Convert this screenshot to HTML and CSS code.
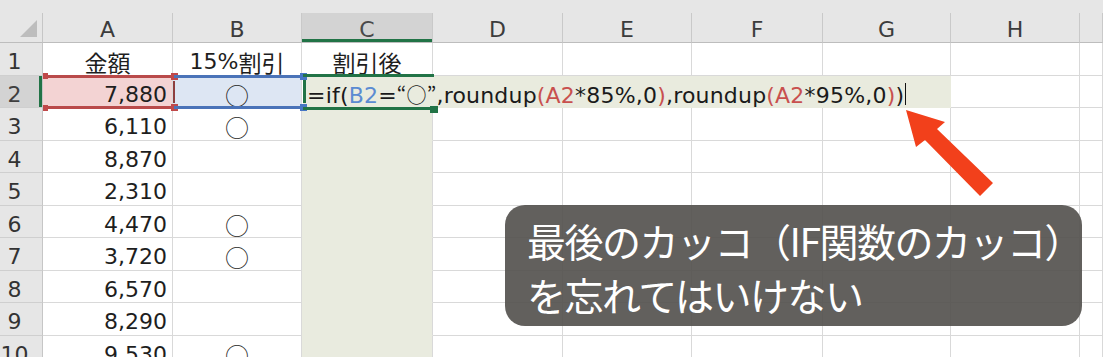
FILE: index.html
```html
<!DOCTYPE html>
<html lang="ja">
<head>
<meta charset="utf-8">
<title>Excel IF formula</title>
<link rel="stylesheet" href="styles.css">
</head>
<body>
<div class="wrap">
  <div class="band"></div>
  <div class="sheet">
    <div class="corner"><svg width="43" height="30" viewBox="0 0 43 30"><polygon points="20,24 37,7 37,24" fill="#bdbdbd"/></svg></div>
    <div class="ch">A</div><div class="ch">B</div><div class="ch ch-sel">C</div><div class="ch">D</div><div class="ch">E</div><div class="ch">F</div><div class="ch">G</div><div class="ch">H</div><div class="ch"></div>

    <div class="rh">1</div><div class="c cen jp">金額</div><div class="c cen">15%<span class="jp">割引</span></div><div class="c cen jp">割引後</div><div class="c"></div><div class="c"></div><div class="c"></div><div class="c"></div><div class="c"></div><div class="c"></div>

    <div class="rh rh-sel">2</div><div class="c num a2">7,880</div><div class="c cen circ b2">○</div><div class="c"></div><div class="c"></div><div class="c"></div><div class="c"></div><div class="c"></div><div class="c"></div><div class="c"></div>

    <div class="rh">3</div><div class="c num">6,110</div><div class="c cen circ">○</div><div class="c shade"></div><div class="c"></div><div class="c"></div><div class="c"></div><div class="c"></div><div class="c"></div><div class="c"></div>

    <div class="rh">4</div><div class="c num">8,870</div><div class="c"></div><div class="c shade"></div><div class="c"></div><div class="c"></div><div class="c"></div><div class="c"></div><div class="c"></div><div class="c"></div>

    <div class="rh">5</div><div class="c num">2,310</div><div class="c"></div><div class="c shade"></div><div class="c"></div><div class="c"></div><div class="c"></div><div class="c"></div><div class="c"></div><div class="c"></div>

    <div class="rh">6</div><div class="c num">4,470</div><div class="c cen circ">○</div><div class="c shade"></div><div class="c"></div><div class="c"></div><div class="c"></div><div class="c"></div><div class="c"></div><div class="c"></div>

    <div class="rh">7</div><div class="c num">3,720</div><div class="c cen circ">○</div><div class="c shade"></div><div class="c"></div><div class="c"></div><div class="c"></div><div class="c"></div><div class="c"></div><div class="c"></div>

    <div class="rh">8</div><div class="c num">6,570</div><div class="c"></div><div class="c shade"></div><div class="c"></div><div class="c"></div><div class="c"></div><div class="c"></div><div class="c"></div><div class="c"></div>

    <div class="rh">9</div><div class="c num">8,290</div><div class="c"></div><div class="c shade"></div><div class="c"></div><div class="c"></div><div class="c"></div><div class="c"></div><div class="c"></div><div class="c"></div>

    <div class="rh">10</div><div class="c num">9,530</div><div class="c cen circ">○</div><div class="c shade"></div><div class="c"></div><div class="c"></div><div class="c"></div><div class="c"></div><div class="c"></div><div class="c"></div>
  </div>

  <div class="ref ref-a">
    <span class="sq sq-tl"></span><span class="sq sq-bl"></span>
    <span class="sq sq-tr"></span><span class="sq sq-br"></span>
    <span class="ref-a-edge"></span>
  </div>
  <div class="ref ref-b">
    <span class="sq sq-tr"></span><span class="sq sq-br"></span>
  </div>

  <div class="editor">
    <span class="ed-text">=if(<span class="blue">B2</span>=<span class="jp q">“○”</span>,roundup<span class="red">(A2</span>*85%,0<span class="red">)</span>,roundup<span class="red">(A2</span>*95%,0<span class="red">)</span>)</span><span class="caret"></span>
  </div>
  <div class="active-c2"><span class="c2-left"></span><span class="handle"></span></div>

  <svg class="arrow" width="1103" height="357" viewBox="0 0 1103 357">
    <polygon points="906,110 945,122 937,129 993,183 980,196 925,140 916,147" fill="#f2401b"/>
  </svg>

  <div class="callout">
    <p class="callout-line">最後のカッコ（IF関数のカッコ）</p>
    <p class="callout-line">を忘れてはいけない</p>
  </div>
</div>
</body>
</html>
```

FILE: styles.css
```css
html, body {
  margin: 0;
  padding: 0;
  background: #ffffff;
}
body {
  width: 1103px;
  height: 357px;
  overflow: hidden;
  font-family: "DejaVu Sans", "Noto Sans CJK JP", sans-serif;
  color: #222;
}
.wrap {
  position: relative;
  width: 1103px;
  height: 357px;
  overflow: hidden;
}
.band {
  height: 13px;
  background: #e6e6e6;
}
.sheet {
  display: grid;
  grid-template-columns: 43px 130px 129px 131px 130px 129px 131px 128px 129px 1fr;
  grid-template-rows: 30px repeat(10, 32.5px);
}
.corner {
  background: #e6e6e6;
  border-right: 1px solid #c6c6c6;
  border-bottom: 1px solid #bdbdbd;
  box-sizing: border-box;
}
.corner svg { display: block; }
.ch {
  background: #e6e6e6;
  border-right: 1px solid #c9c9c9;
  border-bottom: 1px solid #bdbdbd;
  box-sizing: border-box;
  display: flex;
  align-items: center;
  justify-content: center;
  padding-top: 3px;
  font-size: 22px;
  color: #3c3c3c;
}
.ch-sel {
  background: #d3d3d3;
  box-shadow: inset 0 -3px 0 #217346;
  color: #4a4a4a;
}
.rh {
  background: #e6e6e6;
  border-right: 1px solid #c6c6c6;
  border-bottom: 1px solid #cfcfcf;
  box-sizing: border-box;
  display: flex;
  align-items: center;
  justify-content: center;
  padding-right: 13px;
  padding-top: 6px;
  font-size: 22px;
  color: #333;
}
.rh-sel {
  background: #d3d3d3;
  box-shadow: inset -3px 0 0 #217346;
  color: #3f3f3f;
}
.c {
  border-right: 1px solid #d9d9d9;
  border-bottom: 1px solid #d9d9d9;
  box-sizing: border-box;
  display: flex;
  align-items: center;
  padding-top: 6px;
  font-size: 22px;
  color: #1e1e1e;
  white-space: nowrap;
}
.cen { justify-content: center; }
.num {
  justify-content: flex-end;
  padding-right: 5px;
}
.a2 { background: #f3d3d3; }
.b2 { background: #dde6f3; }
.jp {
  font-family: "Noto Sans CJK JP", sans-serif;
  font-size: 23px;
}
.circ {
  font-family: "Noto Sans CJK JP", sans-serif;
  font-size: 24px;
  font-weight: 300;
}
.shade {
  background: #e9ebdf;
  border-bottom-color: #e9ebdf;
}

/* reference highlights (borders only) */
.ref {
  position: absolute;
  top: 75px;
  height: 34px;
  box-sizing: border-box;
  z-index: 1;
}
.ref-a {
  left: 44px;
  width: 130px;
  border-top: 3px solid #b94a4a;
  border-bottom: 3px solid #b94a4a;
}
.ref-a-edge {
  position: absolute;
  right: -1px;
  top: 3px;
  bottom: 3px;
  width: 2px;
  background: #8e3e3e;
}
.ref-b {
  left: 174px;
  width: 129px;
  border-top: 3px solid #4a73b8;
  border-bottom: 3px solid #4a73b8;
}
.sq {
  position: absolute;
  width: 7px;
  height: 7px;
}
.ref-a .sq { background: #c0494a; }
.ref-b .sq { background: #4676c4; }
.sq-tl { left: -1px; top: -5px; width: 5px; height: 6px; }
.sq-bl { left: -1px; bottom: -5px; width: 5px; height: 6px; }
.sq-tr { right: -4px; top: -5px; }
.sq-br { right: -4px; bottom: -5px; }
.ref-a .sq-tr, .ref-a .sq-br { z-index: 2; }

/* formula edit */
.editor {
  position: absolute;
  left: 303px;
  top: 76px;
  width: 648px;
  height: 32px;
  background: #e9ebde;
  display: flex;
  align-items: center;
  padding-left: 4px;
  padding-top: 4px;
  box-sizing: border-box;
  font-size: 22px;
  color: #1a1a1a;
  white-space: nowrap;
}
.ed-text { letter-spacing: 0.2px; }
.q { font-size: 20px; }
.blue { color: #5b8bd2; }
.red { color: #c8504e; }
.caret {
  display: inline-block;
  width: 1px;
  height: 22px;
  background: #111;
  margin-left: 1px;
}
.active-c2 {
  position: absolute;
  left: 303px;
  top: 74px;
  width: 131px;
  height: 36px;
  box-sizing: border-box;
  border-top: 3px solid #217346;
  border-bottom: 3px solid #217346;
  z-index: 2;
}
.c2-left {
  position: absolute;
  left: 0;
  top: 3px;
  width: 3px;
  height: 23px;
  background: #217346;
}
.handle {
  position: absolute;
  right: -4px;
  bottom: -6px;
  width: 8px;
  height: 7px;
  background: #217346;
}
.arrow {
  position: absolute;
  left: 0;
  top: 0;
  z-index: 3;
}
.callout {
  position: absolute;
  left: 505px;
  top: 205px;
  width: 577px;
  height: 121px;
  box-sizing: border-box;
  padding: 8px 0 0 22px;
  border-radius: 20px;
  background: rgba(85, 82, 79, 0.92);
  color: #ffffff;
  z-index: 4;
}
.callout-line {
  margin: 0;
  font-family: "Noto Sans CJK JP", sans-serif;
  font-size: 39px;
  letter-spacing: -1.5px;
  line-height: 54px;
  white-space: nowrap;
}
```
